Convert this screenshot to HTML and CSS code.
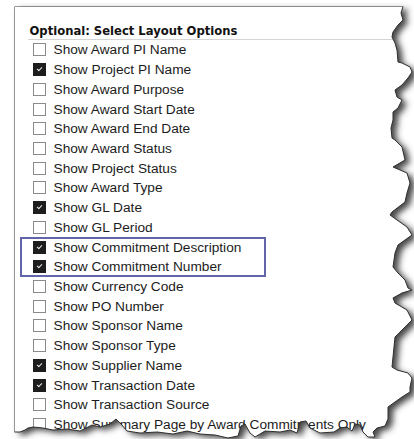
FILE: index.html
```html
<!DOCTYPE html>
<html lang="en">
<head>
<meta charset="utf-8">
<title>Layout Options</title>
<link rel="stylesheet" href="styles.css">
</head>
<body>
<div class="paper">
  <h3 class="title">Optional: Select Layout Options</h3>
  <div class="opts">
    <div class="opt"><span class="cb"></span>Show Award PI Name</div>
    <div class="opt"><span class="cb on"></span>Show Project PI Name</div>
    <div class="opt"><span class="cb"></span>Show Award Purpose</div>
    <div class="opt"><span class="cb"></span>Show Award Start Date</div>
    <div class="opt"><span class="cb"></span>Show Award End Date</div>
    <div class="opt"><span class="cb"></span>Show Award Status</div>
    <div class="opt"><span class="cb"></span>Show Project Status</div>
    <div class="opt"><span class="cb"></span>Show Award Type</div>
    <div class="opt"><span class="cb on"></span>Show GL Date</div>
    <div class="opt"><span class="cb"></span>Show GL Period</div>
    <div class="focus">
      <div class="opt"><span class="cb on"></span>Show Commitment Description</div>
      <div class="opt"><span class="cb on"></span>Show Commitment Number</div>
    </div>
    <div class="opt"><span class="cb"></span>Show Currency Code</div>
    <div class="opt"><span class="cb"></span>Show PO Number</div>
    <div class="opt"><span class="cb"></span>Show Sponsor Name</div>
    <div class="opt"><span class="cb"></span>Show Sponsor Type</div>
    <div class="opt"><span class="cb on"></span>Show Supplier Name</div>
    <div class="opt"><span class="cb on"></span>Show Transaction Date</div>
    <div class="opt"><span class="cb"></span>Show Transaction Source</div>
    <div class="opt"><span class="cb"></span>Show Summary Page by Award Commitments Only</div>
  </div>
</div>

<!-- torn right and bottom edge of the sheet, with its drop shadow -->
<svg class="tear" width="414" height="439" viewBox="0 0 414 439" aria-hidden="true">
  <defs>
    <mask id="outside" maskUnits="userSpaceOnUse" x="0" y="0" width="414" height="439">
      <rect width="414" height="439" fill="#fff"/>
      <path fill="#000" d="M14.5 6.5 L403 6.5 L401 13 L403 20 L398 25 L393 32 L392 37 L395 43 L397 50 L398 62 L402 63 L410 67 L412 72 L408 78 L402 85 L395 90 L397 97 L402 100 L398 108 L393 112 L393 120 L391 128 L392 138 L395 140 L402 147 L405 160 L393 167 L407 173 L410 183 L407 193 L405 202 L392 212 L390 215 L397 220 L407 227 L412 235 L405 240 L398 245 L395 253 L393 267 L398 273 L405 280 L408 288 L412 290 L402 293 L393 298 L395 303 L407 310 L412 320 L407 325 L402 330 L395 337 L393 357 L392 367 L397 370 L408 373 L412 378 L410 387 L410 392 L402 397 L395 402 L388 407 L388 419 L385 426 L377 428 L373 432 L375 437 L368 437 L363 432 L360 425 L355 424 L352 431 L347 427 L340 428 L334 432 L320 433 L310 428 L306 421 L300 422 L297 433 L290 430 L280 432 L265 431 L255 437 L250 433 L245 424 L241 426 L238 436 L228 438 L215 435 L200 434 L187 431 L173 434 L157 432 L140 433 L127 431 L121 424 L116 419 L110 424 L100 427 L92 425 L80 431 L67 429 L53 430 L43 428 L33 427 L28 428 L25 430 L20 432 L14.5 432 Z"/>
    </mask>
    <filter id="soft" x="-20%" y="-20%" width="140%" height="140%">
      <feGaussianBlur stdDeviation="3"/>
    </filter>
  </defs>
  <g mask="url(#outside)">
    <rect width="414" height="439" fill="#fff"/>
    <path fill="#444" filter="url(#soft)" transform="translate(5 3)" d="M14.5 6.5 L403 6.5 L401 13 L403 20 L398 25 L393 32 L392 37 L395 43 L397 50 L398 62 L402 63 L410 67 L412 72 L408 78 L402 85 L395 90 L397 97 L402 100 L398 108 L393 112 L393 120 L391 128 L392 138 L395 140 L402 147 L405 160 L393 167 L407 173 L410 183 L407 193 L405 202 L392 212 L390 215 L397 220 L407 227 L412 235 L405 240 L398 245 L395 253 L393 267 L398 273 L405 280 L408 288 L412 290 L402 293 L393 298 L395 303 L407 310 L412 320 L407 325 L402 330 L395 337 L393 357 L392 367 L397 370 L408 373 L412 378 L410 387 L410 392 L402 397 L395 402 L388 407 L388 419 L385 426 L377 428 L373 432 L375 437 L368 437 L363 432 L360 425 L355 424 L352 431 L347 427 L340 428 L334 432 L320 433 L310 428 L306 421 L300 422 L297 433 L290 430 L280 432 L265 431 L255 437 L250 433 L245 424 L241 426 L238 436 L228 438 L215 435 L200 434 L187 431 L173 434 L157 432 L140 433 L127 431 L121 424 L116 419 L110 424 L100 427 L92 425 L80 431 L67 429 L53 430 L43 428 L33 427 L28 428 L25 430 L20 432 L14.5 432 Z"/>
  </g>
  <polyline fill="none" stroke="#2f2f2f" stroke-width="1" stroke-linejoin="round" points="403,6.5 401,13 403,20 398,25 393,32 392,37 395,43 397,50 398,62 402,63 410,67 412,72 408,78 402,85 395,90 397,97 402,100 398,108 393,112 393,120 391,128 392,138 395,140 402,147 405,160 393,167 407,173 410,183 407,193 405,202 392,212 390,215 397,220 407,227 412,235 405,240 398,245 395,253 393,267 398,273 405,280 408,288 412,290 402,293 393,298 395,303 407,310 412,320 407,325 402,330 395,337 393,357 392,367 397,370 408,373 412,378 410,387 410,392 402,397 395,402 388,407 388,419 385,426 377,428 373,432 375,437 368,437 363,432 360,425 355,424 352,431 347,427 340,428 334,432 320,433 310,428 306,421 300,422 297,433 290,430 280,432 265,431 255,437 250,433 245,424 241,426 238,436 228,438 215,435 200,434 187,431 173,434 157,432 140,433 127,431 121,424 116,419 110,424 100,427 92,425 80,431 67,429 53,430 43,428 33,427 28,428 25,430 20,432 14.5,432"/>
</svg>
</body>
</html>
```

FILE: styles.css
```css
html, body {
  margin: 0;
  background: #fff;
}

body {
  font-family: "Liberation Sans", Arial, sans-serif;
  color: #1c1c1c;
  overflow: hidden;
}

/* the sheet: only its top and left edges are straight */
.paper {
  margin: 6px 0 0 14px;
  border-top: 1px solid #3a3a3a;
  border-left: 1px solid #3a3a3a;
  height: 425px;
}

.title {
  margin: 18px 0 0 13px;
  padding: 0 0 1px 1.5px;
  font-family: "DejaVu Sans", Verdana, sans-serif;
  font-weight: bold;
  font-size: 11.6px;
  line-height: 13px;
  color: #111;
  border-bottom: 1px solid #d4d4d4;
}

.opts {
  display: flex;
  flex-direction: column;
}

.opt {
  display: flex;
  align-items: center;
  gap: 7.5px;
  height: 19.72px;
  padding-left: 18px;
  font-size: 13.7px;
  white-space: nowrap;
}

.cb {
  flex: none;
  box-sizing: border-box;
  width: 13px;
  height: 13px;
  border: 1px solid #8a8a8a;
  background: #fff;
  display: flex;
  align-items: center;
  justify-content: center;
}

.cb.on {
  background: #1d1d1d;
  border-color: #1d1d1d;
}

.cb.on::after {
  content: "";
  width: 4px;
  height: 2px;
  border-left: 1.3px solid #e8e8e8;
  border-bottom: 1.3px solid #e8e8e8;
  transform: translate(0, -1px) rotate(-45deg);
}

/* framed pair of commitment options */
.focus {
  margin-left: 5px;
  width: 246px;
  outline: 2px solid #6266a8;
  outline-offset: -2px;
}

.focus .opt {
  padding-left: 13px;
}

.tear {
  position: absolute;
  left: 0;
  top: 0;
  pointer-events: none;
}
```
